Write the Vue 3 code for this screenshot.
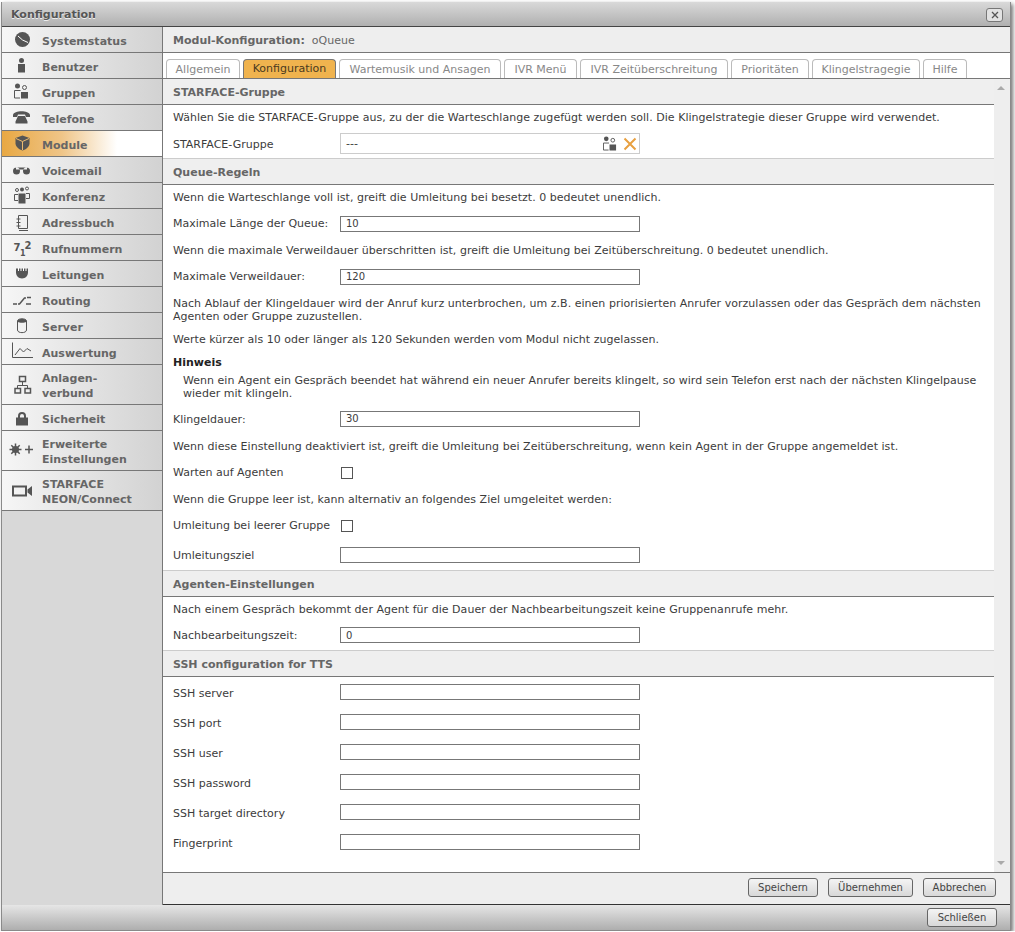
<template>
  <div class="window">
    <header class="titlebar">
      <span>Konfiguration</span>
      <button class="close"><svg width="10" height="8" viewBox="0 0 10 8"><path d="M2 1 L8 7 M8 1 L2 7" /></svg></button>
    </header>

    <div class="layout">
      <nav class="sidebar">
        <a v-for="item in navItems" :key="item.label" class="nav-item" :class="{ active: item.active, tall: item.tall }">
          <svg class="nav-icon" width="34" height="24" viewBox="4 0 34 24">
            <path v-for="(p, i) in item.icon" :key="i" :d="p.d" :class="p.c" />
            <g v-if="item.digits" class="digits">
              <text x="13.5" y="14.5">7</text>
              <text x="20" y="20" class="small">1</text>
              <text x="24.5" y="13">2</text>
            </g>
          </svg>
          <span class="nav-label">
            <template v-for="(line, i) in item.label.split('|')" :key="i">{{ line }}<br /></template>
          </span>
        </a>
      </nav>

      <main class="pane">
        <div class="pane-title"><b>Modul-Konfiguration:</b> <span>oQueue</span></div>
        <div class="tabs">
          <span
            v-for="tab in tabs"
            :key="tab.label"
            class="tab"
            :class="{ current: tab.label === 'Konfiguration' }"
            :style="{ width: tab.width + 'px' }"
          >{{ tab.label }}</span>
        </div>

        <div class="scroller">
          <div class="content">
            <h3 class="head">STARFACE-Gruppe</h3>
            <p class="desc">Wählen Sie die STARFACE-Gruppe aus, zu der die Warteschlange zugefügt werden soll. Die Klingelstrategie dieser Gruppe wird verwendet.</p>
            <div class="field first low">
              <label>STARFACE-Gruppe</label>
              <div class="picker">
                <span>---</span>
                <svg width="14" height="15" viewBox="14 3 15 16">
                  <path v-for="(p, i) in groupIcon" :key="i" :d="p.d" :class="p.c" />
                </svg>
                <svg width="14" height="14" viewBox="0 0 14 14"><path class="x" d="M1.5 1.5 L12.5 12.5 M12.5 1.5 L1.5 12.5" /></svg>
              </div>
            </div>

            <h3 class="head">Queue-Regeln</h3>
            <p class="desc">Wenn die Warteschlange voll ist, greift die Umleitung bei besetzt. 0 bedeutet unendlich.</p>
            <div class="field"><label>Maximale Länge der Queue:</label><input value="10" readonly /></div>
            <p class="desc">Wenn die maximale Verweildauer überschritten ist, greift die Umleitung bei Zeitüberschreitung. 0 bedeutet unendlich.</p>
            <div class="field"><label>Maximale Verweildauer:</label><input value="120" readonly /></div>
            <p class="desc">Nach Ablauf der Klingeldauer wird der Anruf kurz unterbrochen, um z.B. einen priorisierten Anrufer vorzulassen oder das Gespräch dem nächsten<br />Agenten oder Gruppe zuzustellen.</p>
            <p class="desc tight">Werte kürzer als 10 oder länger als 120 Sekunden werden vom Modul nicht zugelassen.</p>
            <div class="note">
              <strong>Hinweis</strong>
              <p>Wenn ein Agent ein Gespräch beendet hat während ein neuer Anrufer bereits klingelt, so wird sein Telefon erst nach der nächsten Klingelpause<br />wieder mit klingeln.</p>
            </div>
            <div class="field low"><label>Klingeldauer:</label><input value="30" readonly /></div>
            <p class="desc loose">Wenn diese Einstellung deaktiviert ist, greift die Umleitung bei Zeitüberschreitung, wenn kein Agent in der Gruppe angemeldet ist.</p>
            <div class="field"><label>Warten auf Agenten</label><span class="check"></span></div>
            <p class="desc">Wenn die Gruppe leer ist, kann alternativ an folgendes Ziel umgeleitet werden:</p>
            <div class="field"><label>Umleitung bei leerer Gruppe</label><span class="check"></span></div>
            <div class="field roomy last"><label>Umleitungsziel</label><input readonly /></div>

            <h3 class="head">Agenten-Einstellungen</h3>
            <p class="desc">Nach einem Gespräch bekommt der Agent für die Dauer der Nachbearbeitungszeit keine Gruppenanrufe mehr.</p>
            <div class="field last"><label>Nachbearbeitungszeit:</label><input value="0" readonly /></div>

            <h3 class="head">SSH configuration for TTS</h3>
            <div v-for="name in sshFields" :key="name" class="field roomy low"><label>{{ name }}</label><input readonly /></div>
          </div>
          <div class="scrollbar">
            <i class="arrow up"></i>
            <i class="arrow down"></i>
          </div>
        </div>

        <div class="actions">
          <button class="btn speichern">Speichern</button>
          <button class="btn uebernehmen">Übernehmen</button>
          <button class="btn abbrechen">Abbrechen</button>
        </div>
      </main>
    </div>

    <footer class="bottombar">
      <button class="btn schliessen">Schließen</button>
    </footer>
  </div>
</template>

<script setup>
// local icon coordinates: x is page x, y is 12 at the middle of the row
const circle = (cx, cy, r) => `M${cx - r} ${cy}a${r} ${r} 0 1 0 ${2 * r} 0a${r} ${r} 0 1 0 ${-2 * r} 0Z`

const groupIcon = [
  { c: 'f', d: `${circle(17.5, 6, 2.5)}M21 12h7v6.5h-7Z` },
  { c: 's', d: `${circle(24.5, 7.5, 2)}M14.5 18V10.5H20.5M14.5 18H20` },
]

const navItems = [
  { label: 'Systemstatus', icon: [
    { c: 'f', d: circle(22.5, 11.5, 7.5) },
    { c: 'w', d: 'M18 8 L22.5 12 L28 14.5' },
  ] },
  { label: 'Benutzer', icon: [
    { c: 'f', d: `${circle(21.5, 6.5, 2.5)}M18 10h7V18.5H18Z` },
  ] },
  { label: 'Gruppen', icon: groupIcon },
  { label: 'Telefone', icon: [
    { c: 'f', d: 'M13 9C14 4 29 4 30 9L30 11H26L25 8.5H18L17 11H13ZM18 10h7l2.5 5.5V17.5H15.5V15.5Z' },
  ] },
  { label: 'Module', active: true, icon: [
    { c: 'f', d: 'M22.5 3.5L29.5 6V11.5C29.5 14.5 26 17.5 22.5 18.5C19 17.5 15.5 14.5 15.5 11.5V6Z' },
    { c: 'w', d: 'M16 6.5L22.5 9.5L29 6.5M22.5 9.5V18' },
  ] },
  { label: 'Voicemail', icon: [
    { c: 'f', d: `${circle(16.5, 13, 3.5)}${circle(26.5, 13, 3.5)}M16 9.5h11v2H16Z` },
  ] },
  { label: 'Konferenz', icon: [
    { c: 'f', d: `${circle(22, 5.5, 2)}M18.5 9.5h7V19.5h-7Z` },
    { c: 's', d: `${circle(17, 6, 1.5)}${circle(27, 4.5, 1.5)}M18 10.5h-3.5V16.5H18M26 9.5h3.5V14.5H26` },
  ] },
  { label: 'Adressbuch', icon: [
    { c: 's', d: 'M18.5 5.5H27.5V18.5H18.5ZM19 20.5H28' },
    { c: 's', d: 'M16.5 9h4M16.5 12.5h4M16.5 16h4' },
  ] },
  { label: 'Rufnummern', digits: true, icon: [] },
  { label: 'Leitungen', icon: [
    { c: 'f', d: 'M16 6.5h12V10.5C28 13.5 25.5 16.5 22 16.5C18.5 16.5 16 13.5 16 10.5Z' },
    { c: 'w', d: 'M18.5 6v3M21 6v3M23.5 6v3M26 6v3' },
  ] },
  { label: 'Routing', icon: [
    { c: 's mid', d: 'M13 16h4M18 16h1.5L24.5 10H26M27 9.5h4M26 16h5' },
  ] },
  { label: 'Server', icon: [
    { c: 's', d: 'M17.5 7C17.5 4 26.5 4 26.5 7V16C26.5 19.5 17.5 19.5 17.5 16Z' },
    { c: 'f', d: 'M18 6C19 4.5 25 4.5 26 6V8C25 9 19 9 18 8Z' },
  ] },
  { label: 'Auswertung', icon: [
    { c: 's', d: 'M12.5 2.5V17.5H33' },
    { c: 's', d: 'M15 15L20 8.5L23.5 12L27 8.5L31 11' },
  ] },
  { label: 'Anlagen-|verbund', tall: true, icon: [
    { c: 's mid', d: 'M19.5 3.5h6v5h-6ZM15 15.5h5.5V20H15ZM25 15.5h5.5V20H25Z' },
    { c: 's', d: 'M22.5 8.5V12.5M17.5 15.5V12.5H27.5V15.5' },
  ] },
  { label: 'Sicherheit', icon: [
    { c: 's thick', d: 'M19 12V10C19 6 25 6 25 10V12' },
    { c: 'f', d: 'M16 11.5h12v8H16Z' },
  ] },
  { label: 'Erweiterte|Einstellungen', tall: true, icon: [
    { c: 's mid', d: 'M15.5 4.5V16.5M9.5 10.5H21.5M11.3 6.3L19.7 14.7M19.7 6.3L11.3 14.7' },
    { c: 'f', d: circle(15.5, 10.5, 3.5) },
    { c: 's mid', d: 'M29 6.5V14.5M25 10.5H33' },
  ] },
  { label: 'STARFACE|NEON/Connect', tall: true, icon: [
    { c: 's thick', d: 'M13 7.5H26V16.5H13Z' },
    { c: 'f', d: 'M27.5 10.5L32 7V17L27.5 13.5Z' },
  ] },
]

const tabs = [
  { label: 'Allgemein', width: 74 },
  { label: 'Konfiguration', width: 93 },
  { label: 'Wartemusik und Ansagen', width: 162 },
  { label: 'IVR Menü', width: 73 },
  { label: 'IVR Zeitüberschreitung', width: 148 },
  { label: 'Prioritäten', width: 78 },
  { label: 'Klingelstragegie', width: 108 },
  { label: 'Hilfe', width: 44 },
]

const sshFields = ['SSH server', 'SSH port', 'SSH user', 'SSH password', 'SSH target directory', 'Fingerprint']
</script>

<style>
html, body { overflow: hidden; background: #fff; }
</style>

<style scoped>
.window {
  box-sizing: border-box;
  width: 1010px;
  height: 929px;
  margin: 2px 0 0 1px;
  display: flex;
  flex-direction: column;
  border: 1px solid #8a8a8a;
  border-top: 0;
  box-shadow: 2px 2px 4px rgba(0, 0, 0, 0.55);
  font: 11px/13px "DejaVu Sans", Verdana, sans-serif;
  color: #3c3c3c;
  background: #eee;
}

.titlebar {
  box-sizing: border-box;
  height: 25px;
  padding: 0 7px 0 9px;
  display: flex;
  align-items: center;
  justify-content: space-between;
  flex: none;
  background: linear-gradient(#d9d9d9, #b0b0b0);
  border-bottom: 1px solid #444;
  font-weight: bold;
  color: #555;
  text-shadow: 0 1px 0 #eee;
}
.close {
  width: 17px;
  height: 14px;
  margin-top: 1px;
  padding: 0;
  display: flex;
  align-items: center;
  justify-content: center;
  background: #e2e2e2;
  border: 1px solid #777;
  border-radius: 3px;
}
.close path { stroke: #555; stroke-width: 1.3; fill: none; }

.layout { flex: 1; display: flex; min-height: 0; }

.sidebar {
  box-sizing: border-box;
  width: 161px;
  flex: none;
  background: #d8d8d8;
  border-right: 1px solid #777;
}
.nav-item {
  box-sizing: border-box;
  height: 26px;
  display: flex;
  align-items: center;
  gap: 4px;
  padding-left: 2px;
  background: linear-gradient(90deg, #f6f6f6, #d2d2d2);
  border-bottom: 1px solid #777;
  font-weight: bold;
  color: #666;
}
.nav-item.tall { height: 40px; }
.nav-item.active { background: linear-gradient(90deg, #e8a843 0, #efc588 60px, #fff 115px); }
.nav-icon { flex: none; }
.nav-label { line-height: 15px; padding-top: 4px; }
.tall .nav-label { padding-top: 2px; }
.digits { font: bold 10px "DejaVu Sans", sans-serif; fill: #555; }
.digits .small { font-size: 8px; }

.f { fill: #555; stroke: none; }
.s { fill: none; stroke: #555; stroke-width: 1; }
.s.mid { stroke-width: 1.5; }
.s.thick { stroke-width: 2; }
.w { fill: none; stroke: #fff; stroke-width: 1; }
.active .w { stroke: #edbb70; }
.x { fill: none; stroke: #e8a040; stroke-width: 2; }

.pane { flex: 1; min-width: 0; display: flex; flex-direction: column; }
.pane-title {
  box-sizing: border-box;
  height: 26px;
  flex: none;
  padding: 2px 10px 0;
  display: flex;
  align-items: center;
  gap: 7px;
  border-bottom: 1px solid #777;
  color: #666;
}

.tabs {
  box-sizing: border-box;
  height: 26px;
  flex: none;
  padding: 6px 0 0 3px;
  display: flex;
  gap: 3px;
  background: #fff;
  border-bottom: 1px solid #777;
}
.tab {
  box-sizing: border-box;
  height: 19px;
  padding-top: 3px;
  text-align: center;
  border: 1px solid #bbb;
  border-bottom: 0;
  border-radius: 4px 4px 0 0;
  color: #888;
}
.tab.current {
  background: #f0b34e;
  border-color: #777;
  color: #4a3a20;
  padding-top: 2px;
}

.scroller { flex: 1; min-height: 0; display: flex; }
.content { flex: 1; min-width: 0; background: #fff; }

.head {
  box-sizing: border-box;
  height: 26px;
  margin: 0;
  padding: 2px 10px 0;
  display: flex;
  align-items: center;
  background: #efefef;
  border-bottom: 1px solid #777;
  font-size: 11px;
  color: #666;
}
.desc { margin: 0; padding: 6px 10px; letter-spacing: 0.03px; }
.desc.tight { padding-top: 4px; }
.desc.loose { padding-top: 7px; }

.field {
  box-sizing: border-box;
  height: 28px;
  padding: 0 10px 1px;
  display: flex;
  align-items: center;
}
.field label { width: 167px; flex: none; }
.field.low label { padding-top: 2px; }
.field.first {
  height: 29px;
  border-bottom: 1px solid #ccc;
}
.field.last {
  height: 29px;
  padding-bottom: 2px;
  border-bottom: 1px solid #ccc;
}
.field.roomy { height: 30px; padding-bottom: 0; }
.field.roomy.last { height: 31px; padding-bottom: 0; }
.field input {
  box-sizing: border-box;
  width: 300px;
  height: 16px;
  padding: 0 5px;
  border: 1px solid #777;
  background: #fff;
  font: 10px "DejaVu Sans", Verdana, sans-serif;
  color: inherit;
  outline: 0;
}
.picker {
  box-sizing: border-box;
  width: 300px;
  height: 21px;
  padding: 0 2px 0 5px;
  display: flex;
  align-items: center;
  gap: 6px;
  border: 1px solid #ccc;
}
.picker span { flex: 1; }
.check {
  box-sizing: border-box;
  width: 12px;
  height: 12px;
  margin-left: 1px;
  border: 1px solid #555;
  background: #fff;
}

.note { padding: 4px 10px 5px; letter-spacing: 0.02px; }
.note strong { display: block; color: #222; }
.note p { margin: 5px 0 0; padding-left: 10px; }

.scrollbar {
  width: 16px;
  flex: none;
  position: relative;
  background: #eee;
}
.arrow {
  position: absolute;
  left: 3px;
  width: 0;
  height: 0;
  border-left: 4px solid transparent;
  border-right: 4px solid transparent;
}
.arrow.up { top: 7px; border-bottom: 4px solid #aaa; }
.arrow.down { bottom: 7px; border-top: 4px solid #aaa; }

.actions {
  box-sizing: border-box;
  height: 33px;
  flex: none;
  padding: 5px 14px 0 0;
  display: flex;
  justify-content: flex-end;
  gap: 10px;
  border-top: 1px solid #777;
  border-bottom: 1px solid #333;
}
.btn {
  box-sizing: border-box;
  height: 19px;
  padding: 0;
  border: 1px solid #666;
  border-radius: 3px;
  background: linear-gradient(#f4f4f4, #d8d8d8);
  font: 10px/13px "DejaVu Sans", Verdana, sans-serif;
  color: #444;
}
.speichern { width: 70px; }
.uebernehmen { width: 85px; }
.abbrechen { width: 73px; }
.schliessen { width: 70px; }

.bottombar {
  box-sizing: border-box;
  height: 25px;
  flex: none;
  padding: 3px 13px 0 0;
  display: flex;
  justify-content: flex-end;
  background: linear-gradient(#e6e6e6, #aeaeae);
}
</style>
